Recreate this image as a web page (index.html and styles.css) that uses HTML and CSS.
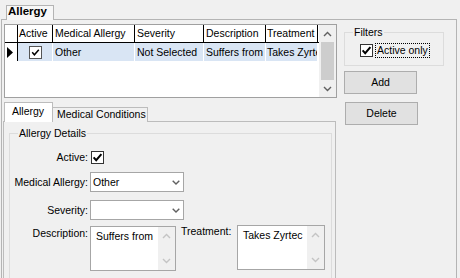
FILE: index.html
```html
<!DOCTYPE html>
<html>
<head>
<meta charset="utf-8">
<title>Allergy</title>
<link rel="stylesheet" href="styles.css">
</head>
<body>
<div class="tabstrip">
  <div class="tab-top">Allergy</div>
</div>
<div class="page">
  <div class="left">
    <div class="grid">
      <div class="grid-body">
        <div class="grow ghead">
          <div class="gc c0"></div>
          <div class="gc c1">Active</div>
          <div class="gc c2">Medical Allergy</div>
          <div class="gc c3">Severity</div>
          <div class="gc c4">Description</div>
          <div class="gc c5">Treatment</div>
        </div>
        <div class="grow gdata">
          <div class="gc c0"><svg width="6" height="11" viewBox="0 0 6 11"><polygon points="0,0 6,5.5 0,11" fill="#000"/></svg></div>
          <div class="gc c1 center"><svg width="13" height="13" viewBox="0 0 13 13"><rect x="0.5" y="0.5" width="12" height="12" fill="#fff" stroke="#555"/><path d="M3.2 6.3 L5.4 8.8 L9.8 3.8" fill="none" stroke="#000" stroke-width="1.5"/></svg></div>
          <div class="gc c2">Other</div>
          <div class="gc c3">Not Selected</div>
          <div class="gc c4">Suffers from</div>
          <div class="gc c5">Takes Zyrtec</div>
        </div>
      </div>
      <div class="vscroll">
        <div class="sb-btn"><svg width="9" height="6" viewBox="0 0 9 6"><path d="M1 5 L4.5 1.5 L8 5" fill="none" stroke="#606060" stroke-width="1.4"/></svg></div>
        <div class="sb-thumb"></div>
        <div class="sb-btn"><svg width="9" height="6" viewBox="0 0 9 6"><path d="M1 1 L4.5 4.5 L8 1" fill="none" stroke="#606060" stroke-width="1.4"/></svg></div>
      </div>
    </div>

    <div class="tabs2">
      <div class="tabstrip2">
        <div class="t2 sel">Allergy</div>
        <div class="t2 med">Medical Conditions</div>
      </div>
      <div class="page2">
        <div class="group details">
          <div class="gtitle">Allergy Details</div>
          <div class="frow r-active">
            <div class="flabel">Active:</div>
            <svg class="chk" width="13" height="13" viewBox="0 0 13 13"><rect x="0.5" y="0.5" width="12" height="12" fill="#fff" stroke="#333"/><path d="M2.6 6.4 L5.2 9.2 L10.4 3.2" fill="none" stroke="#000" stroke-width="2"/></svg>
          </div>
          <div class="frow r-combo">
            <div class="flabel">Medical Allergy:</div>
            <div class="combo"><span>Other</span><svg width="8" height="5" viewBox="0 0 8 5"><path d="M0.7 0.7 L4 4 L7.3 0.7" fill="none" stroke="#606060" stroke-width="1.4"/></svg></div>
          </div>
          <div class="frow r-combo">
            <div class="flabel">Severity:</div>
            <div class="combo"><span></span><svg width="8" height="5" viewBox="0 0 8 5"><path d="M0.7 0.7 L4 4 L7.3 0.7" fill="none" stroke="#606060" stroke-width="1.4"/></svg></div>
          </div>
          <div class="frow r-text">
            <div class="flabel desc-label">Description:</div>
            <div class="tbox desc-box">
              <div class="ttext">Suffers from</div>
              <div class="tscroll">
                <svg width="9" height="6" viewBox="0 0 9 6"><path d="M1 5 L4.5 1.5 L8 5" fill="none" stroke="#c4c4c4" stroke-width="1.4"/></svg>
                <svg width="9" height="6" viewBox="0 0 9 6"><path d="M1 1 L4.5 4.5 L8 1" fill="none" stroke="#c4c4c4" stroke-width="1.4"/></svg>
              </div>
            </div>
            <div class="treat-label">Treatment:</div>
            <div class="tbox treat-box">
              <div class="ttext">Takes Zyrtec</div>
              <div class="tscroll">
                <svg width="9" height="6" viewBox="0 0 9 6"><path d="M1 5 L4.5 1.5 L8 5" fill="none" stroke="#c4c4c4" stroke-width="1.4"/></svg>
                <svg width="9" height="6" viewBox="0 0 9 6"><path d="M1 1 L4.5 4.5 L8 1" fill="none" stroke="#c4c4c4" stroke-width="1.4"/></svg>
              </div>
            </div>
          </div>
        </div>
      </div>
    </div>
  </div>

  <div class="right">
    <div class="group filters">
      <div class="gtitle">Filters</div>
      <div class="chkrow">
        <svg class="chk" width="13" height="13" viewBox="0 0 13 13"><rect x="0.5" y="0.5" width="12" height="12" fill="#fff" stroke="#333"/><path d="M2.6 6.4 L5.2 9.2 L10.4 3.2" fill="none" stroke="#000" stroke-width="2"/></svg>
        <span class="focus">Active only</span>
      </div>
    </div>
    <div class="btn add">Add</div>
    <div class="btn del">Delete</div>
  </div>
</div>
</body>
</html>
```

FILE: styles.css
```css
* { box-sizing: border-box; }
html, body { margin: 0; padding: 0; }
body {
  width: 460px;
  height: 278px;
  overflow: hidden;
  background: #f0f0f0;
  font-family: "Liberation Sans", Arial, sans-serif;
  font-size: 10.5px;
  color: #000;
  line-height: 13px;
}
svg { display: block; }

/* outer tab */
.tabstrip {
  height: 20px;
  display: flex;
  align-items: flex-end;
  padding-left: 6px;
  margin-bottom: -1px;
  position: relative;
  z-index: 1;
}
.tab-top {
  width: 48px;
  height: 15px;
  border: 1px solid #b4b4b4;
  border-bottom: 0;
  background: #f7f7f7;
  font-weight: bold;
  font-size: 11.5px;
  line-height: 11px;
  padding-left: 1px;
}

.page {
  margin-left: 1px;
  width: 456px;
  height: 270px;
  border: 1px solid #b4b4b4;
  padding: 4px 0 0 2px;
  display: flex;
  align-items: flex-start;
}
.left { width: 333px; flex: none; }

/* data grid */
.grid {
  width: 333px;
  height: 74px;
  border: 1px solid #a0a0a0;
  background: #fff;
  display: flex;
}
.grid-body { flex: 1; overflow: hidden; }
.grow { display: flex; }
.gc {
  flex: none;
  height: 100%;
  padding-left: 2px;
  white-space: nowrap;
  overflow: hidden;
}
.c0 { width: 13px; }
.c1 { width: 35px; padding-left: 1px; }
.c2 { width: 82px; }
.c3 { width: 69px; }
.c4 { width: 62px; }
.c5 { width: 52px; padding-left: 1px; }

.ghead { height: 18px; border-bottom: 1px solid #000; }
.ghead .gc { border-right: 1px solid #000; line-height: 17px; }
.gdata { height: 18px; }
.gdata .gc {
  background: #d9e5f4;
  border-right: 1px solid #fff;
  line-height: 18px;
}
.gdata .c0 {
  background: #fff;
  border-right: 1px solid #000;
  display: flex;
  align-items: center;
  padding-left: 2px;
}
.gdata .center {
  display: flex;
  align-items: center;
  justify-content: center;
  padding-left: 1px;
}

.vscroll {
  width: 17px;
  flex: none;
  background: #f0f0f0;
  display: flex;
  flex-direction: column;
}
.sb-btn {
  height: 17px;
  display: flex;
  align-items: center;
  justify-content: center;
}
.sb-thumb { flex: 1; margin: 0 2px; background: #cdcdcd; }

/* inner tab control */
.tabs2 { margin: 4px 0 0 -1px; width: 333px; }
.tabstrip2 {
  height: 20px;
  display: flex;
  align-items: flex-end;
  padding-left: 1px;
  margin-bottom: -1px;
  position: relative;
  z-index: 1;
}
.t2 {
  border: 1px solid #bcbcbc;
  border-bottom: 0;
  white-space: nowrap;
  line-height: 11px;
}
.t2.sel {
  width: 49px;
  height: 20px;
  background: #fff;
  padding: 3px 0 0 7px;
}
.t2.med {
  width: 96px;
  height: 15px;
  margin-left: -1px;
  background: #f0f0f0;
  padding: 1px 0 0 4px;
}
.page2 {
  height: 170px;
  border: 1px solid #bcbcbc;
  padding: 0 3px 0 5px;
}

/* group boxes */
.group { border: 1px solid #dcdcdc; }
.gtitle {
  width: max-content;
  margin: -7px 0 0 8px;
  padding: 0 1px;
  background: #f0f0f0;
  line-height: 13px;
}
.details { margin-top: 11px; height: 160px; }

.frow { display: flex; align-items: center; }
.r-active { margin-top: 11px; height: 13px; }
.r-combo { margin-top: 8px; height: 20px; }
.r-text { margin-top: 5px; align-items: flex-start; }
.flabel {
  width: 78px;
  flex: none;
  text-align: right;
  margin-right: 2px;
  white-space: nowrap;
}
.chk { flex: none; }
.r-active .chk { margin-left: 1px; }

.combo {
  width: 94px;
  height: 20px;
  border: 1px solid #a6a6a6;
  background: #fff;
  display: flex;
  align-items: center;
  justify-content: space-between;
  padding: 0 3px 0 2px;
}

.desc-label { padding-top: 2px; }
.tbox {
  display: flex;
  border: 1px solid #a6a6a6;
  background: #fff;
  height: 45px;
  flex: none;
}
.desc-box { width: 86px; margin-top: 1px; }
.treat-label {
  width: 52px;
  flex: none;
  margin-left: 5px;
  white-space: nowrap;
}
.treat-box { width: 88px; margin-left: 4px; }
.ttext {
  flex: 1;
  padding: 3px 0 0 5px;
  white-space: nowrap;
  overflow: hidden;
}
.tscroll {
  width: 17px;
  flex: none;
  background: #f0f0f0;
  display: flex;
  flex-direction: column;
  align-items: center;
  justify-content: space-between;
  padding: 6px 0 6px;
}

/* right column */
.right {
  margin-left: 7px;
  width: 101px;
  flex: none;
  display: flex;
  flex-direction: column;
  align-items: flex-start;
}
.filters {
  width: 100px;
  margin-top: 8px;
  padding-bottom: 7px;
}
.chkrow {
  display: flex;
  align-items: center;
  height: 15px;
  margin: 4px 0 0 15px;
}
.focus {
  margin-left: 2px;
  border: 1px dotted #000;
  padding: 0 1px;
  line-height: 13px;
  white-space: nowrap;
}
.btn {
  width: 73px;
  height: 23px;
  background: #e1e1e1;
  border: 1px solid #adadad;
  display: flex;
  align-items: center;
  justify-content: center;
}
.add { margin-top: 5px; }
.del { margin-top: 8px; margin-left: 1px; }
```
